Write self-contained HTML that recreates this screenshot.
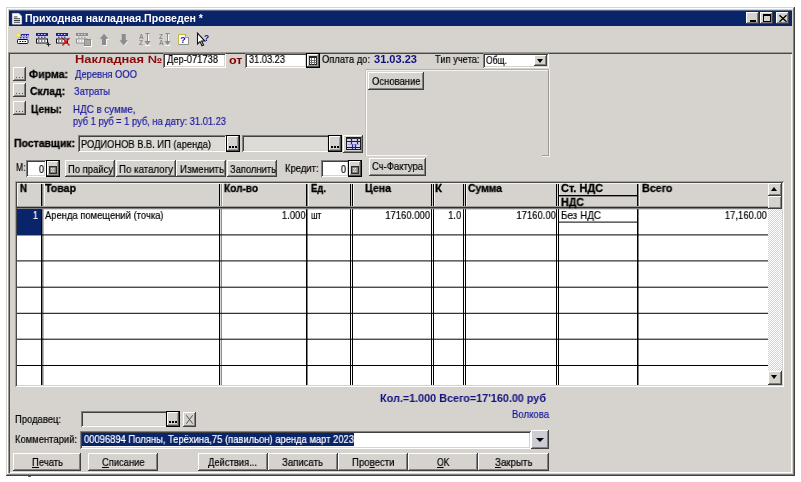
<!DOCTYPE html>
<html><head><meta charset="utf-8"><title>1C</title><style>
html,body{margin:0;padding:0;}
body{width:801px;height:482px;background:#fff;position:relative;overflow:hidden;font-family:"Liberation Sans",sans-serif;font-size:11px;}
div{position:absolute;box-sizing:border-box;}
.t{position:absolute;white-space:pre;will-change:transform;}
svg{position:absolute;overflow:visible;will-change:transform;}
u{text-decoration:underline;}
</style></head><body>
<div style="left:6px;top:7px;width:789px;height:469px;background:#d6d3ce;box-shadow:inset -1px -1px 0 #404040,inset 1px 1px 0 #d6d3ce,inset -2px -2px 0 #808080,inset 2px 2px 0 #ffffff;"></div>
<div style="left:9px;top:11px;width:783px;height:15px;background:#0a246a;"></div>
<div style="left:9px;top:10px;width:783px;height:1px;background:rgba(10,36,106,.6);"></div>
<svg style="left:12px;top:13px" width="10" height="11.5" viewBox="0 0 11 13" preserveAspectRatio="none"><path d="M0.5 0.5H7.5L10.5 3.5V12.5H0.5Z" fill="#fff" stroke="#d8d8d8" stroke-width="1"/><path d="M2 4.5H6M2 6.5H9M2 8.5H9M2 10.5H9" stroke="#222" stroke-width="1"/></svg>
<div style="left:746px;top:12px;width:13px;height:12px;background:#d6d3ce;box-shadow:inset -1px -1px 0 #404040,inset 1px 1px 0 #ffffff,inset -2px -2px 0 #808080;"><div style="left:4px;top:8px;width:6px;height:2px;background:#000"></div></div>
<div style="left:760px;top:12px;width:13px;height:12px;background:#d6d3ce;box-shadow:inset -1px -1px 0 #404040,inset 1px 1px 0 #ffffff,inset -2px -2px 0 #808080;"><div style="left:3px;top:2px;width:8px;height:8px;border:1px solid #000;border-top-width:2px"></div></div>
<div style="left:776px;top:12px;width:13px;height:12px;background:#d6d3ce;box-shadow:inset -1px -1px 0 #404040,inset 1px 1px 0 #ffffff,inset -2px -2px 0 #808080;"><svg style="left:3px;top:3px" width="8" height="7" viewBox="0 0 8 7"><path d="M0.5 0.3L7.5 6.7M7.5 0.3L0.5 6.7" stroke="#000" stroke-width="1.4"/></svg></div>
<svg style="left:0;top:0" width="220" height="52" viewBox="0 0 220 52"><rect x="20.5" y="34" width="8.5" height="2.5" fill="#20209a"/><rect x="22" y="35" width="1.5" height="1" fill="#d0d0ff"/><rect x="24.5" y="35" width="1.5" height="1" fill="#d0d0ff"/><rect x="27" y="35" width="1.5" height="1" fill="#d0d0ff"/><rect x="18" y="36.5" width="11" height="2.5" fill="#c0c0ec"/><rect x="20" y="37.2" width="1.5" height="1" fill="#20209a"/><rect x="23" y="37.2" width="1.5" height="1" fill="#20209a"/><rect x="26" y="37.2" width="1.5" height="1" fill="#20209a"/><rect x="17.5" y="39.5" width="10.5" height="4" rx="0.8" fill="#fff" stroke="#111"/><rect x="19.5" y="41" width="1.5" height="1" fill="#111"/><rect x="22" y="41" width="1.5" height="1" fill="#111"/><rect x="24.5" y="41" width="1.5" height="1" fill="#111"/><path d="M18.5 32.3V37.5M15.8 34.9H21.2M16.6 33L20.4 36.8M20.4 33L16.6 36.8" stroke="#e4dc50" stroke-width="0.9"/><rect x="17.6" y="34" width="1.8" height="1.8" fill="#ffffa0"/><rect x="36" y="33" width="12" height="3" fill="#20209a"/><rect x="36" y="36" width="12" height="2.5" fill="#d0d0f0"/><rect x="36.5" y="39" width="11" height="4" fill="#fff" stroke="#111"/><rect x="38" y="34" width="1.5" height="1" fill="#d0d0ff"/><rect x="38" y="36.7" width="1.5" height="1" fill="#20209a"/><rect x="38" y="40.5" width="1.5" height="1" fill="#111"/><rect x="41" y="34" width="1.5" height="1" fill="#d0d0ff"/><rect x="41" y="36.7" width="1.5" height="1" fill="#20209a"/><rect x="41" y="40.5" width="1.5" height="1" fill="#111"/><rect x="44" y="34" width="1.5" height="1" fill="#d0d0ff"/><rect x="44" y="36.7" width="1.5" height="1" fill="#20209a"/><rect x="44" y="40.5" width="1.5" height="1" fill="#111"/><path d="M48.5 42.5V46.5M46.5 44.5H50.5" stroke="#222" stroke-width="1"/><rect x="56" y="33" width="12" height="3" fill="#20209a"/><rect x="56" y="36" width="12" height="2.5" fill="#d0d0f0"/><rect x="56.5" y="39" width="11" height="4" fill="#fff" stroke="#111"/><rect x="58" y="34" width="1.5" height="1" fill="#d0d0ff"/><rect x="58" y="36.7" width="1.5" height="1" fill="#20209a"/><rect x="58" y="40.5" width="1.5" height="1" fill="#111"/><rect x="61" y="34" width="1.5" height="1" fill="#d0d0ff"/><rect x="61" y="36.7" width="1.5" height="1" fill="#20209a"/><rect x="61" y="40.5" width="1.5" height="1" fill="#111"/><rect x="64" y="34" width="1.5" height="1" fill="#d0d0ff"/><rect x="64" y="36.7" width="1.5" height="1" fill="#20209a"/><rect x="64" y="40.5" width="1.5" height="1" fill="#111"/><path d="M62.5 38L69.5 45.5M69.5 38L62.5 45.5" stroke="#c81010" stroke-width="1.2"/><rect x="76" y="33" width="12" height="3" fill="#8c8c8c"/><rect x="76" y="36" width="12" height="2.5" fill="#e4e2de"/><rect x="76.5" y="39" width="11" height="4" fill="#fff" stroke="#8c8c8c"/><rect x="78" y="34" width="1.5" height="1" fill="#e0e0e0"/><rect x="78" y="36.7" width="1.5" height="1" fill="#8c8c8c"/><rect x="78" y="40.5" width="1.5" height="1" fill="#8c8c8c"/><rect x="81" y="34" width="1.5" height="1" fill="#e0e0e0"/><rect x="81" y="36.7" width="1.5" height="1" fill="#8c8c8c"/><rect x="81" y="40.5" width="1.5" height="1" fill="#8c8c8c"/><rect x="84" y="34" width="1.5" height="1" fill="#e0e0e0"/><rect x="84" y="36.7" width="1.5" height="1" fill="#8c8c8c"/><rect x="84" y="40.5" width="1.5" height="1" fill="#8c8c8c"/><rect x="84.5" y="39.5" width="6" height="6" fill="#a8a8a8" stroke="#8c8c8c"/><path d="M84 46.5H91.5V40" stroke="#fff" fill="none"/><path d="M104 33.8L108.3 38.8H106V45H102V38.8H99.7Z" fill="#8c8c8c"/><path d="M103 45.5H106.5V39.5H109" stroke="#fff" fill="none" stroke-width="1" opacity=".8"/><path d="M123.7 45.2L128 40.2H125.7V34H121.7V40.2H119.4Z" fill="#8c8c8c"/><path d="M124.5 45.2L128.3 41" stroke="#fff" fill="none" stroke-width="1" opacity=".8"/><text x="139" y="38.6" font-size="6.5" font-weight="bold" fill="#8a8a8a" font-family="Liberation Sans">A</text><text x="139" y="45" font-size="6.5" font-weight="bold" fill="#8a8a8a" font-family="Liberation Sans">Z</text><path d="M145.5 33.5H149.5M147.5 34V42" stroke="#8a8a8a"/><path d="M144.5 41H150.5L147.5 45Z" fill="#8a8a8a"/><path d="M148.5 34.5V41M145 45.5H150.5" stroke="#fff" fill="none" opacity=".85"/><text x="159" y="38.6" font-size="6.5" font-weight="bold" fill="#8a8a8a" font-family="Liberation Sans">Z</text><text x="159" y="45" font-size="6.5" font-weight="bold" fill="#8a8a8a" font-family="Liberation Sans">A</text><path d="M165.5 33.5H169.5M167.5 34V42" stroke="#8a8a8a"/><path d="M164.5 41H170.5L167.5 45Z" fill="#8a8a8a"/><path d="M168.5 34.5V41M165 45.5H170.5" stroke="#fff" fill="none" opacity=".85"/><path d="M178.5 34.5H185.5L188.5 37.5V44.5H178.5Z" fill="#fff" stroke="#b0ae80"/><path d="M185.5 34.5V37.5H188.5" fill="#e8e8e0" stroke="#999"/><path d="M188.5 37.5V44.5H178.5" fill="none" stroke="#8a8a8a"/><path d="M178.5 44.5V34.5H185" fill="none" stroke="#c4bc48"/><text x="180.3" y="43.3" font-size="9" font-weight="bold" fill="#10108c" font-family="Liberation Sans">?</text><path d="M197.5 33.2V44L200 41.6L202 45.8L203.6 45L201.6 41H204.8Z" fill="#fff" stroke="#111" stroke-width="1.1"/><text x="204" y="40.8" font-size="8.5" font-weight="bold" fill="#10108c" font-family="Liberation Sans">?</text></svg>
<div style="left:8px;top:52px;width:784px;height:421px;background:#d6d3ce;box-shadow:inset 1px 1px 0 #9c9a94,inset 2px 2px 0 #484848,inset -1px -1px 0 #ffffff;"></div>
<div style="left:163px;top:53px;width:63px;height:15px;background:#fff;box-shadow:inset 1px 1px 0 #808080,inset -1px -1px 0 #ffffff,inset 2px 2px 0 #404040,inset -2px -2px 0 #d6d3ce;"></div>
<div style="left:245px;top:53px;width:62px;height:15px;background:#fff;box-shadow:inset 1px 1px 0 #808080,inset -1px -1px 0 #ffffff,inset 2px 2px 0 #404040,inset -2px -2px 0 #d6d3ce;"></div>
<div style="left:306px;top:53px;width:14px;height:15px;background:#d6d3ce;box-shadow:inset 0 0 0 1px #000,inset -2px -2px 0 #505050,inset 2px 2px 0 #ffffff,inset -3px -3px 0 #a09e98;"><svg style="left:3px;top:3px" width="8" height="9" viewBox="0 0 8 9"><rect x="0.5" y="0.5" width="7" height="8" fill="#fff" stroke="#222"/><path d="M0 1.5H8" stroke="#222"/><path d="M0 4.5H8M0 6.5H8M2.5 2V9M5.5 2V9" stroke="#555" stroke-width="0.8"/></svg></div>
<div style="left:483px;top:53px;width:66px;height:15px;background:#fff;box-shadow:inset 1px 1px 0 #808080,inset -1px -1px 0 #ffffff,inset 2px 2px 0 #404040,inset -2px -2px 0 #d6d3ce;"></div>
<div style="left:534px;top:55px;width:13px;height:11px;background:#d6d3ce;box-shadow:inset -1px -1px 0 #404040,inset 1px 1px 0 #ffffff,inset -2px -2px 0 #808080;"><div style="left:3px;top:4px;width:0;height:0;border:3.5px solid transparent;border-top:4px solid #000;border-bottom:none"></div></div>
<div style="left:13px;top:67px;width:13px;height:14px;background:#d6d3ce;box-shadow:inset -1px -1px 0 #404040,inset 1px 1px 0 #ffffff,inset -2px -2px 0 #808080;"><div style="left:3px;top:10px;width:1px;height:1px;background:#555;box-shadow:3px 0 0 #555,6px 0 0 #555"></div></div>
<div style="left:13px;top:83px;width:13px;height:14px;background:#d6d3ce;box-shadow:inset -1px -1px 0 #404040,inset 1px 1px 0 #ffffff,inset -2px -2px 0 #808080;"><div style="left:3px;top:10px;width:1px;height:1px;background:#555;box-shadow:3px 0 0 #555,6px 0 0 #555"></div></div>
<div style="left:13px;top:101px;width:13px;height:14px;background:#d6d3ce;box-shadow:inset -1px -1px 0 #404040,inset 1px 1px 0 #ffffff,inset -2px -2px 0 #808080;"><div style="left:3px;top:10px;width:1px;height:1px;background:#555;box-shadow:3px 0 0 #555,6px 0 0 #555"></div></div>
<div style="left:78px;top:135px;width:148px;height:17px;background:#dddbd6;box-shadow:inset 1px 1px 0 #808080,inset -1px -1px 0 #ffffff,inset 2px 2px 0 #404040,inset -2px -2px 0 #d6d3ce;"></div>
<div style="left:226px;top:135px;width:14px;height:17px;background:#d6d3ce;box-shadow:inset 0 0 0 1px #000,inset -2px -2px 0 #505050,inset 2px 2px 0 #ffffff,inset -3px -3px 0 #a09e98;"><div style="left:3px;top:11px;width:2px;height:2px;background:#000;box-shadow:3px 0 0 #000,6px 0 0 #000"></div></div>
<div style="left:242px;top:135px;width:87px;height:17px;background:#dddbd6;box-shadow:inset 1px 1px 0 #808080,inset -1px -1px 0 #ffffff,inset 2px 2px 0 #404040,inset -2px -2px 0 #d6d3ce;"></div>
<div style="left:328px;top:135px;width:14px;height:17px;background:#d6d3ce;box-shadow:inset 0 0 0 1px #000,inset -2px -2px 0 #505050,inset 2px 2px 0 #ffffff,inset -3px -3px 0 #a09e98;"><div style="left:3px;top:11px;width:2px;height:2px;background:#000;box-shadow:3px 0 0 #000,6px 0 0 #000"></div></div>
<div style="left:343px;top:135px;width:20px;height:18px;background:#d6d3ce;box-shadow:inset -1px -1px 0 #404040,inset 1px 1px 0 #ffffff,inset -2px -2px 0 #808080;"><svg style="left:3px;top:2px" width="15" height="13" viewBox="0 0 15 13"><rect x="0.5" y="0.5" width="14" height="12" fill="#d4d4ee" stroke="#1a1a1a"/><path d="M1 1.5H14" stroke="#333"/><path d="M1 4.5H14M1 10.5H14" stroke="#1a1a1a"/><path d="M5.5 2V7M11.5 2V7M6.5 7V12M9.5 7V12" stroke="#20208c" stroke-width="1.2"/><path d="M2 7.5H13" stroke="#8080c0" stroke-width="1" opacity=".6"/></svg></div>
<div style="left:365px;top:69px;width:184px;height:1px;background:#b4b0a8;"></div>
<div style="left:366px;top:70px;width:182px;height:1px;background:#f4f2ee;"></div>
<div style="left:365px;top:69px;width:1px;height:87px;background:#c4c0b8;"></div>
<div style="left:366px;top:70px;width:1px;height:85px;background:#fbfaf8;"></div>
<div style="left:548px;top:70px;width:1px;height:86px;background:#9c9a94;"></div>
<div style="left:549px;top:69px;width:1px;height:87px;background:#f4f2ee;"></div>
<div style="left:366px;top:155px;width:61px;height:1px;background:#f8f7f4;"></div>
<div style="left:542px;top:155px;width:7px;height:1px;background:#9c9a94;"></div>
<div style="left:542px;top:156px;width:8px;height:1px;background:#f4f2ee;"></div>
<div style="left:368px;top:72px;width:56px;height:18px;background:#d6d3ce;box-shadow:inset -1px -1px 0 #404040,inset 1px 1px 0 #ffffff,inset -2px -2px 0 #808080;"></div>
<div style="left:369px;top:158px;width:57px;height:18px;background:#d6d3ce;box-shadow:inset -1px -1px 0 #404040,inset 1px 1px 0 #ffffff,inset -2px -2px 0 #808080;"></div>
<div style="left:26px;top:160px;width:20px;height:17px;background:#fff;box-shadow:inset 1px 1px 0 #808080,inset -1px -1px 0 #ffffff,inset 2px 2px 0 #404040,inset -2px -2px 0 #d6d3ce;"></div>
<div style="left:46px;top:160px;width:14px;height:17px;background:#d6d3ce;box-shadow:inset 0 0 0 1px #000,inset -2px -2px 0 #505050,inset 2px 2px 0 #ffffff,inset -3px -3px 0 #a09e98;"><svg style="left:3px;top:6px" width="8" height="8" viewBox="0 0 8 8"><rect x="0" y="0" width="8" height="8" fill="#2c2c2c"/><rect x="1.3" y="1.3" width="5.4" height="5.4" fill="#a8a6a0"/><path d="M2 2.5H6M2 5.5H6" stroke="#e8e8e8" stroke-width="1" stroke-dasharray="1 1"/><path d="M3 4H5" stroke="#e8e8e8" stroke-dasharray="1 1"/></svg></div>
<div style="left:65px;top:160px;width:50px;height:17px;background:#d6d3ce;box-shadow:inset -1px -1px 0 #404040,inset 1px 1px 0 #ffffff,inset -2px -2px 0 #808080;"></div>
<div style="left:116px;top:160px;width:60px;height:17px;background:#d6d3ce;box-shadow:inset -1px -1px 0 #404040,inset 1px 1px 0 #ffffff,inset -2px -2px 0 #808080;"></div>
<div style="left:176px;top:160px;width:50px;height:17px;background:#d6d3ce;box-shadow:inset -1px -1px 0 #404040,inset 1px 1px 0 #ffffff,inset -2px -2px 0 #808080;"></div>
<div style="left:227px;top:160px;width:50px;height:17px;background:#d6d3ce;box-shadow:inset -1px -1px 0 #404040,inset 1px 1px 0 #ffffff,inset -2px -2px 0 #808080;"></div>
<div style="left:321px;top:160px;width:28px;height:17px;background:#fff;box-shadow:inset 1px 1px 0 #808080,inset -1px -1px 0 #ffffff,inset 2px 2px 0 #404040,inset -2px -2px 0 #d6d3ce;"></div>
<div style="left:348px;top:160px;width:14px;height:17px;background:#d6d3ce;box-shadow:inset 0 0 0 1px #000,inset -2px -2px 0 #505050,inset 2px 2px 0 #ffffff,inset -3px -3px 0 #a09e98;"><svg style="left:3px;top:6px" width="8" height="8" viewBox="0 0 8 8"><rect x="0" y="0" width="8" height="8" fill="#2c2c2c"/><rect x="1.3" y="1.3" width="5.4" height="5.4" fill="#a8a6a0"/><path d="M2 2.5H6M2 5.5H6" stroke="#e8e8e8" stroke-width="1" stroke-dasharray="1 1"/><path d="M3 4H5" stroke="#e8e8e8" stroke-dasharray="1 1"/></svg></div>
<div style="left:15px;top:181px;width:769px;height:206px;background:#fff;box-shadow:inset 1px 1px 0 #a4a29c,inset -1px -1px 0 #ffffff,inset 2px 2px 0 #484848,inset -2px -2px 0 #d6d3ce;"></div>
<div style="left:17px;top:183px;width:751px;height:25px;background:#d6d3ce;"></div>
<div style="left:41px;top:183px;width:1px;height:202px;background:#000;"></div>
<div style="left:42px;top:183px;width:1px;height:202px;background:#808080;"></div>
<div style="left:43px;top:183px;width:1px;height:202px;background:#b8b8b8;"></div>
<div style="left:219px;top:183px;width:1px;height:202px;background:#000;"></div>
<div style="left:220px;top:183px;width:1px;height:202px;background:#d8d8d8;"></div>
<div style="left:221px;top:183px;width:1px;height:202px;background:#909090;"></div>
<div style="left:306px;top:183px;width:1px;height:202px;background:#000;"></div>
<div style="left:307px;top:183px;width:1px;height:202px;background:#808080;"></div>
<div style="left:350px;top:183px;width:1px;height:202px;background:#000;"></div>
<div style="left:352px;top:183px;width:1px;height:202px;background:#000;"></div>
<div style="left:431px;top:183px;width:1px;height:202px;background:#000;"></div>
<div style="left:433px;top:183px;width:1px;height:202px;background:#000;"></div>
<div style="left:463px;top:183px;width:1px;height:202px;background:#000;"></div>
<div style="left:465px;top:183px;width:1px;height:202px;background:#000;"></div>
<div style="left:556px;top:183px;width:1px;height:202px;background:#000;"></div>
<div style="left:558px;top:183px;width:1px;height:202px;background:#000;"></div>
<div style="left:637px;top:183px;width:1px;height:202px;background:#000;"></div>
<div style="left:638px;top:183px;width:1px;height:202px;background:#808080;"></div>
<div style="left:17px;top:206px;width:751px;height:1px;background:#a09e9a;"></div>
<div style="left:17px;top:207px;width:751px;height:1px;background:#302e2c;"></div>
<div style="left:17px;top:208px;width:751px;height:1px;background:#808080;"></div>
<div style="left:17px;top:209px;width:751px;height:1px;background:rgba(128,128,128,.3);"></div>
<div style="left:17px;top:234px;width:751px;height:1px;background:rgba(0,0,0,0.60);"></div>
<div style="left:17px;top:235px;width:751px;height:1px;background:rgba(0,0,0,0.40);"></div>
<div style="left:17px;top:260px;width:751px;height:1px;background:rgba(0,0,0,0.60);"></div>
<div style="left:17px;top:261px;width:751px;height:1px;background:rgba(0,0,0,0.40);"></div>
<div style="left:17px;top:286px;width:751px;height:1px;background:rgba(0,0,0,0.30);"></div>
<div style="left:17px;top:287px;width:751px;height:1px;background:rgba(0,0,0,0.70);"></div>
<div style="left:17px;top:312px;width:751px;height:1px;background:rgba(0,0,0,0.20);"></div>
<div style="left:17px;top:313px;width:751px;height:1px;background:rgba(0,0,0,0.80);"></div>
<div style="left:17px;top:338px;width:751px;height:1px;background:rgba(0,0,0,0.30);"></div>
<div style="left:17px;top:339px;width:751px;height:1px;background:rgba(0,0,0,0.70);"></div>
<div style="left:17px;top:365px;width:751px;height:1px;background:#000;"></div>
<div style="left:17px;top:183px;width:751px;height:1px;background:#f4f3f0;"></div>
<div style="left:17px;top:183px;width:1px;height:23px;background:#f4f3f0;"></div>
<div style="left:44px;top:183px;width:1px;height:23px;background:#f4f3f0;"></div>
<div style="left:222px;top:183px;width:1px;height:23px;background:#f4f3f0;"></div>
<div style="left:308px;top:183px;width:1px;height:23px;background:#f4f3f0;"></div>
<div style="left:353px;top:183px;width:1px;height:23px;background:#f4f3f0;"></div>
<div style="left:434px;top:183px;width:1px;height:23px;background:#f4f3f0;"></div>
<div style="left:466px;top:183px;width:1px;height:23px;background:#f4f3f0;"></div>
<div style="left:559px;top:183px;width:1px;height:23px;background:#f4f3f0;"></div>
<div style="left:639px;top:183px;width:1px;height:23px;background:#f4f3f0;"></div>
<div style="left:559px;top:195px;width:78px;height:1px;background:#000;"></div>
<div style="left:559px;top:196px;width:78px;height:1px;background:#8a8884;"></div>
<div style="left:17px;top:209px;width:24px;height:26px;background:#0a246a;"></div>
<div style="left:559px;top:221px;width:78px;height:1px;background:rgba(0,0,0,0.40);"></div>
<div style="left:559px;top:222px;width:78px;height:1px;background:rgba(0,0,0,0.60);"></div>
<div style="left:768px;top:183px;width:14px;height:202px;background:#ebe9e5;background-image:conic-gradient(#fff 25%,#d6d3ce 0 50%,#fff 0 75%,#d6d3ce 0);background-size:2px 2px;"></div>
<div style="left:768px;top:183px;width:14px;height:13px;background:#d6d3ce;box-shadow:inset -1px -1px 0 #404040,inset 1px 1px 0 #ffffff,inset -2px -2px 0 #808080;"><div style="left:3px;top:4px;width:0;height:0;border:3.5px solid transparent;border-bottom:4px solid #000;border-top:none"></div></div>
<div style="left:768px;top:196px;width:14px;height:13px;background:#d6d3ce;box-shadow:inset -1px -1px 0 #404040,inset 1px 1px 0 #ffffff,inset -2px -2px 0 #808080;"></div>
<div style="left:768px;top:371px;width:14px;height:14px;background:#d6d3ce;box-shadow:inset -1px -1px 0 #404040,inset 1px 1px 0 #ffffff,inset -2px -2px 0 #808080;"><div style="left:3px;top:4px;width:0;height:0;border:3.5px solid transparent;border-top:4px solid #000;border-bottom:none"></div></div>
<div style="left:81px;top:411px;width:86px;height:16px;background:#dddbd6;box-shadow:inset 1px 1px 0 #808080,inset -1px -1px 0 #ffffff,inset 2px 2px 0 #404040,inset -2px -2px 0 #d6d3ce;"></div>
<div style="left:166px;top:411px;width:14px;height:16px;background:#d6d3ce;box-shadow:inset 0 0 0 1px #000,inset -2px -2px 0 #505050,inset 2px 2px 0 #ffffff,inset -3px -3px 0 #a09e98;"><div style="left:3px;top:10px;width:2px;height:2px;background:#000;box-shadow:3px 0 0 #000,6px 0 0 #000"></div></div>
<div style="left:183px;top:412px;width:13px;height:15px;background:#d6d3ce;box-shadow:inset -1px -1px 0 #404040,inset 1px 1px 0 #ffffff,inset -2px -2px 0 #808080;"><svg style="left:3px;top:3px" width="7" height="9" viewBox="0 0 7 9"><path d="M0.3 0.3L6.7 8.7M6.7 0.3L0.3 8.7" stroke="#444" stroke-width="0.9"/></svg></div>
<div style="left:80px;top:431px;width:451px;height:18px;background:#fff;box-shadow:inset 1px 1px 0 #808080,inset -1px -1px 0 #ffffff,inset 2px 2px 0 #404040,inset -2px -2px 0 #d6d3ce;"></div>
<div style="left:82px;top:433px;width:272px;height:13px;background:#0a246a;"></div>
<div style="left:531px;top:430px;width:18px;height:19px;background:#cdccd2;box-shadow:inset -1px -1px 0 #404040,inset 1px 1px 0 #ffffff,inset -2px -2px 0 #808080;"><div style="left:5px;top:8px;width:0;height:0;border:4px solid transparent;border-top:4px solid #000;border-bottom:none"></div></div>
<div style="left:13px;top:453px;width:68px;height:18px;background:#d6d3ce;box-shadow:inset -1px -1px 0 #404040,inset 1px 1px 0 #ffffff,inset -2px -2px 0 #808080;"></div>
<div style="left:88px;top:453px;width:70px;height:18px;background:#d6d3ce;box-shadow:inset -1px -1px 0 #404040,inset 1px 1px 0 #ffffff,inset -2px -2px 0 #808080;"></div>
<div style="left:198px;top:453px;width:70px;height:18px;background:#d6d3ce;box-shadow:inset -1px -1px 0 #404040,inset 1px 1px 0 #ffffff,inset -2px -2px 0 #808080;"></div>
<div style="left:268px;top:453px;width:70px;height:18px;background:#d6d3ce;box-shadow:inset -1px -1px 0 #404040,inset 1px 1px 0 #ffffff,inset -2px -2px 0 #808080;"></div>
<div style="left:338px;top:453px;width:70px;height:18px;background:#d6d3ce;box-shadow:inset -1px -1px 0 #404040,inset 1px 1px 0 #ffffff,inset -2px -2px 0 #808080;"></div>
<div style="left:408px;top:453px;width:70px;height:18px;background:#d6d3ce;box-shadow:inset -1px -1px 0 #404040,inset 1px 1px 0 #ffffff,inset -2px -2px 0 #808080;"></div>
<div style="left:478px;top:453px;width:71px;height:18px;background:#d6d3ce;box-shadow:inset -1px -1px 0 #404040,inset 1px 1px 0 #ffffff,inset -2px -2px 0 #808080;"></div>
<div style="left:28px;top:476px;width:3px;height:1px;background:#666;"></div>
<span class="t" style="top:12.5px;font-size:10px;line-height:12px;color:#fff;font-weight:bold;left:25px;transform-origin:0 50%;transform:scaleX(1.0588);">Приходная накладная.Проведен *</span>
<span class="t" style="top:53px;font-size:11px;line-height:13px;color:#8a0808;font-weight:bold;left:75px;transform-origin:0 50%;transform:scaleX(1.1710);">Накладная №</span>
<span class="t" style="top:53px;font-size:11px;line-height:13px;color:#000;-webkit-text-stroke:0.2px;left:167px;transform-origin:0 50%;transform:scaleX(0.8491);">Дер-071738</span>
<span class="t" style="top:52.5px;font-size:11px;line-height:14px;color:#800000;font-weight:bold;left:229px;transform-origin:0 50%;transform:scaleX(1.1398);">от</span>
<span class="t" style="top:53px;font-size:11px;line-height:13px;color:#000;-webkit-text-stroke:0.2px;left:248.5px;transform-origin:0 50%;transform:scaleX(0.8406);">31.03.23</span>
<span class="t" style="top:53px;font-size:11px;line-height:13px;color:#000;-webkit-text-stroke:0.2px;left:322px;transform-origin:0 50%;transform:scaleX(0.8496);">Оплата до:</span>
<span class="t" style="top:53px;font-size:11px;line-height:13px;color:#10107e;font-weight:bold;left:374px;transform-origin:0 50%;transform:scaleX(1.0040);">31.03.23</span>
<span class="t" style="top:53px;font-size:11px;line-height:13px;color:#000;-webkit-text-stroke:0.2px;left:434.5px;transform-origin:0 50%;transform:scaleX(0.8481);">Тип учета:</span>
<span class="t" style="top:54px;font-size:11px;line-height:13px;color:#000;-webkit-text-stroke:0.2px;left:486px;transform-origin:0 50%;transform:scaleX(0.7787);">Общ.</span>
<span class="t" style="top:68px;font-size:11px;line-height:13px;color:#000;font-weight:bold;-webkit-text-stroke:0.3px;left:29px;transform-origin:0 50%;transform:scaleX(0.9630);">Фирма:</span>
<span class="t" style="top:68px;font-size:11px;line-height:13px;color:#1818a0;-webkit-text-stroke:0.2px;left:75px;transform-origin:0 50%;transform:scaleX(0.8563);">Деревня ООО</span>
<span class="t" style="top:85px;font-size:11px;line-height:13px;color:#000;font-weight:bold;-webkit-text-stroke:0.3px;left:30px;transform-origin:0 50%;transform:scaleX(0.9372);">Склад:</span>
<span class="t" style="top:85px;font-size:11px;line-height:13px;color:#1818a0;-webkit-text-stroke:0.2px;left:74px;transform-origin:0 50%;transform:scaleX(0.8471);">Затраты</span>
<span class="t" style="top:103px;font-size:11px;line-height:13px;color:#000;font-weight:bold;-webkit-text-stroke:0.3px;left:30.5px;transform-origin:0 50%;transform:scaleX(0.9118);">Цены:</span>
<span class="t" style="top:103px;font-size:11px;line-height:13px;color:#1818a0;-webkit-text-stroke:0.2px;left:72.5px;transform-origin:0 50%;transform:scaleX(0.8869);">НДС в сумме,</span>
<span class="t" style="top:114.5px;font-size:11px;line-height:13px;color:#1818a0;-webkit-text-stroke:0.2px;left:72.5px;transform-origin:0 50%;transform:scaleX(0.8455);">руб 1 руб = 1 руб, на дату: 31.01.23</span>
<span class="t" style="top:137px;font-size:11px;line-height:13px;color:#000;font-weight:bold;-webkit-text-stroke:0.3px;left:13.5px;transform-origin:0 50%;transform:scaleX(0.9520);">Поставщик:</span>
<span class="t" style="top:138px;font-size:11px;line-height:13px;color:#000;-webkit-text-stroke:0.2px;left:80.5px;transform-origin:0 50%;transform:scaleX(0.8485);">РОДИОНОВ В.В. ИП (аренда)</span>
<span class="t" style="top:75px;font-size:11px;line-height:13px;color:#000;-webkit-text-stroke:0.2px;left:372px;transform-origin:0 50%;transform:scaleX(0.8594);">Основание</span>
<span class="t" style="top:160px;font-size:11px;line-height:13px;color:#000;-webkit-text-stroke:0.2px;left:372px;transform-origin:0 50%;transform:scaleX(0.8585);">Сч-Фактура</span>
<span class="t" style="top:161px;font-size:11px;line-height:13px;color:#000;-webkit-text-stroke:0.2px;left:16px;transform-origin:0 50%;transform:scaleX(0.7765);">М:</span>
<span class="t" style="top:163px;font-size:11px;line-height:13px;color:#000;-webkit-text-stroke:0.2px;right:756.7px;transform-origin:100% 50%;transform:scaleX(0.8600);">0</span>
<span class="t" style="top:162.5px;font-size:11px;line-height:13px;color:#000;-webkit-text-stroke:0.2px;left:68px;transform-origin:0 50%;transform:scaleX(0.8584);">По прайсу</span>
<span class="t" style="top:162.5px;font-size:11px;line-height:13px;color:#000;-webkit-text-stroke:0.2px;left:119px;transform-origin:0 50%;transform:scaleX(0.8821);">По каталогу</span>
<span class="t" style="top:162.5px;font-size:11px;line-height:13px;color:#000;-webkit-text-stroke:0.2px;left:180px;transform-origin:0 50%;transform:scaleX(0.8866);">Изменить</span>
<span class="t" style="top:162.5px;font-size:11px;line-height:13px;color:#000;-webkit-text-stroke:0.2px;left:230px;transform-origin:0 50%;transform:scaleX(0.8516);">Заполнить</span>
<span class="t" style="top:161.5px;font-size:11px;line-height:13px;color:#000;-webkit-text-stroke:0.2px;left:284.5px;transform-origin:0 50%;transform:scaleX(0.8576);">Кредит:</span>
<span class="t" style="top:163px;font-size:11px;line-height:13px;color:#000;-webkit-text-stroke:0.2px;right:454.7px;transform-origin:100% 50%;transform:scaleX(0.8600);">0</span>
<span class="t" style="top:182px;font-size:11px;line-height:13px;color:#000;font-weight:bold;-webkit-text-stroke:0.3px;left:19.5px;transform-origin:0 50%;transform:scaleX(0.8802);">N</span>
<span class="t" style="top:182px;font-size:11px;line-height:13px;color:#000;font-weight:bold;-webkit-text-stroke:0.3px;left:45px;transform-origin:0 50%;transform:scaleX(0.9626);">Товар</span>
<span class="t" style="top:182px;font-size:11px;line-height:13px;color:#000;font-weight:bold;-webkit-text-stroke:0.3px;left:224px;transform-origin:0 50%;transform:scaleX(0.9151);">Кол-во</span>
<span class="t" style="top:182px;font-size:11px;line-height:13px;color:#000;font-weight:bold;-webkit-text-stroke:0.3px;left:310.7px;transform-origin:0 50%;transform:scaleX(0.8625);">Ед.</span>
<span class="t" style="top:182px;font-size:11px;line-height:13px;color:#000;font-weight:bold;-webkit-text-stroke:0.3px;left:365px;transform-origin:0 50%;transform:scaleX(0.9607);">Цена</span>
<span class="t" style="top:182px;font-size:11px;line-height:13px;color:#000;font-weight:bold;-webkit-text-stroke:0.3px;left:435px;transform-origin:0 50%;transform:scaleX(1.0419);">К</span>
<span class="t" style="top:182px;font-size:11px;line-height:13px;color:#000;font-weight:bold;-webkit-text-stroke:0.3px;left:468px;transform-origin:0 50%;transform:scaleX(0.9400);">Сумма</span>
<span class="t" style="top:182px;font-size:11px;line-height:13px;color:#000;font-weight:bold;-webkit-text-stroke:0.3px;left:561px;transform-origin:0 50%;transform:scaleX(0.9952);">Ст. НДС</span>
<span class="t" style="top:182px;font-size:11px;line-height:13px;color:#000;font-weight:bold;-webkit-text-stroke:0.3px;left:642px;transform-origin:0 50%;transform:scaleX(0.9731);">Всего</span>
<span class="t" style="top:195.5px;font-size:11px;line-height:13px;color:#000;font-weight:bold;-webkit-text-stroke:0.3px;left:561px;transform-origin:0 50%;transform:scaleX(0.9691);">НДС</span>
<span class="t" style="top:209px;font-size:11px;line-height:13px;color:#fff;-webkit-text-stroke:0.2px;right:763px;transform-origin:100% 50%;transform:scaleX(0.8600);">1</span>
<span class="t" style="top:209px;font-size:11px;line-height:13px;color:#000;-webkit-text-stroke:0.2px;left:45px;transform-origin:0 50%;transform:scaleX(0.8557);">Аренда помещений (точка)</span>
<span class="t" style="top:209px;font-size:11px;line-height:13px;color:#000;-webkit-text-stroke:0.2px;right:495.5px;transform-origin:100% 50%;transform:scaleX(0.8600);">1.000</span>
<span class="t" style="top:209px;font-size:11px;line-height:13px;color:#000;-webkit-text-stroke:0.2px;left:310.7px;transform-origin:0 50%;transform:scaleX(0.7423);">шт</span>
<span class="t" style="top:209px;font-size:11px;line-height:13px;color:#000;-webkit-text-stroke:0.2px;right:371.5px;transform-origin:100% 50%;transform:scaleX(0.8600);">17160.000</span>
<span class="t" style="top:209px;font-size:11px;line-height:13px;color:#000;-webkit-text-stroke:0.2px;right:339.5px;transform-origin:100% 50%;transform:scaleX(0.8600);">1.0</span>
<span class="t" style="top:209px;font-size:11px;line-height:13px;color:#000;-webkit-text-stroke:0.2px;right:245.5px;transform-origin:100% 50%;transform:scaleX(0.8600);">17160.00</span>
<span class="t" style="top:209px;font-size:11px;line-height:13px;color:#000;-webkit-text-stroke:0.2px;left:561px;transform-origin:0 50%;transform:scaleX(0.8979);">Без НДС</span>
<span class="t" style="top:209px;font-size:11px;line-height:13px;color:#000;-webkit-text-stroke:0.2px;right:34px;transform-origin:100% 50%;transform:scaleX(0.8600);">17,160.00</span>
<span class="t" style="top:392px;font-size:11px;line-height:13px;color:#10107e;font-weight:bold;left:380px;transform-origin:0 50%;transform:scaleX(0.9822);">Кол.=1.000 Всего=17'160.00 руб</span>
<span class="t" style="top:408px;font-size:11px;line-height:13px;color:#1818a0;-webkit-text-stroke:0.2px;left:512px;transform-origin:0 50%;transform:scaleX(0.8699);">Волкова</span>
<span class="t" style="top:413px;font-size:11px;line-height:13px;color:#000;-webkit-text-stroke:0.2px;left:15px;transform-origin:0 50%;transform:scaleX(0.8576);">Продавец:</span>
<span class="t" style="top:433px;font-size:11px;line-height:13px;color:#000;-webkit-text-stroke:0.2px;left:15px;transform-origin:0 50%;transform:scaleX(0.8570);">Комментарий:</span>
<span class="t" style="top:433px;font-size:11px;line-height:13px;color:#fff;-webkit-text-stroke:0.2px;left:83.5px;transform-origin:0 50%;transform:scaleX(0.8549);">00096894 Поляны, Терёхина,75 (павильон) аренда март 2023</span>
<span class="t" style="top:456px;font-size:11px;line-height:13px;color:#000;-webkit-text-stroke:0.2px;left:31.5px;transform-origin:0 50%;transform:scaleX(0.8600);"><u>П</u>ечать</span>
<span class="t" style="top:456px;font-size:11px;line-height:13px;color:#000;-webkit-text-stroke:0.2px;left:101.5px;transform-origin:0 50%;transform:scaleX(0.8497);"><u>С</u>писание</span>
<span class="t" style="top:456px;font-size:11px;line-height:13px;color:#000;-webkit-text-stroke:0.2px;left:208px;transform-origin:0 50%;transform:scaleX(0.8540);">Действия...</span>
<span class="t" style="top:456px;font-size:11px;line-height:13px;color:#000;-webkit-text-stroke:0.2px;left:282px;transform-origin:0 50%;transform:scaleX(0.8721);">Записать</span>
<span class="t" style="top:456px;font-size:11px;line-height:13px;color:#000;-webkit-text-stroke:0.2px;left:352.2px;transform-origin:0 50%;transform:scaleX(0.8726);">Про<u>в</u>ести</span>
<span class="t" style="top:456px;font-size:11px;line-height:13px;color:#000;-webkit-text-stroke:0.2px;left:437.4px;transform-origin:0 50%;transform:scaleX(0.7859);"><u>O</u>K</span>
<span class="t" style="top:456px;font-size:11px;line-height:13px;color:#000;-webkit-text-stroke:0.2px;left:494.7px;transform-origin:0 50%;transform:scaleX(0.8846);"><u>З</u>акрыть</span>
</body></html>
